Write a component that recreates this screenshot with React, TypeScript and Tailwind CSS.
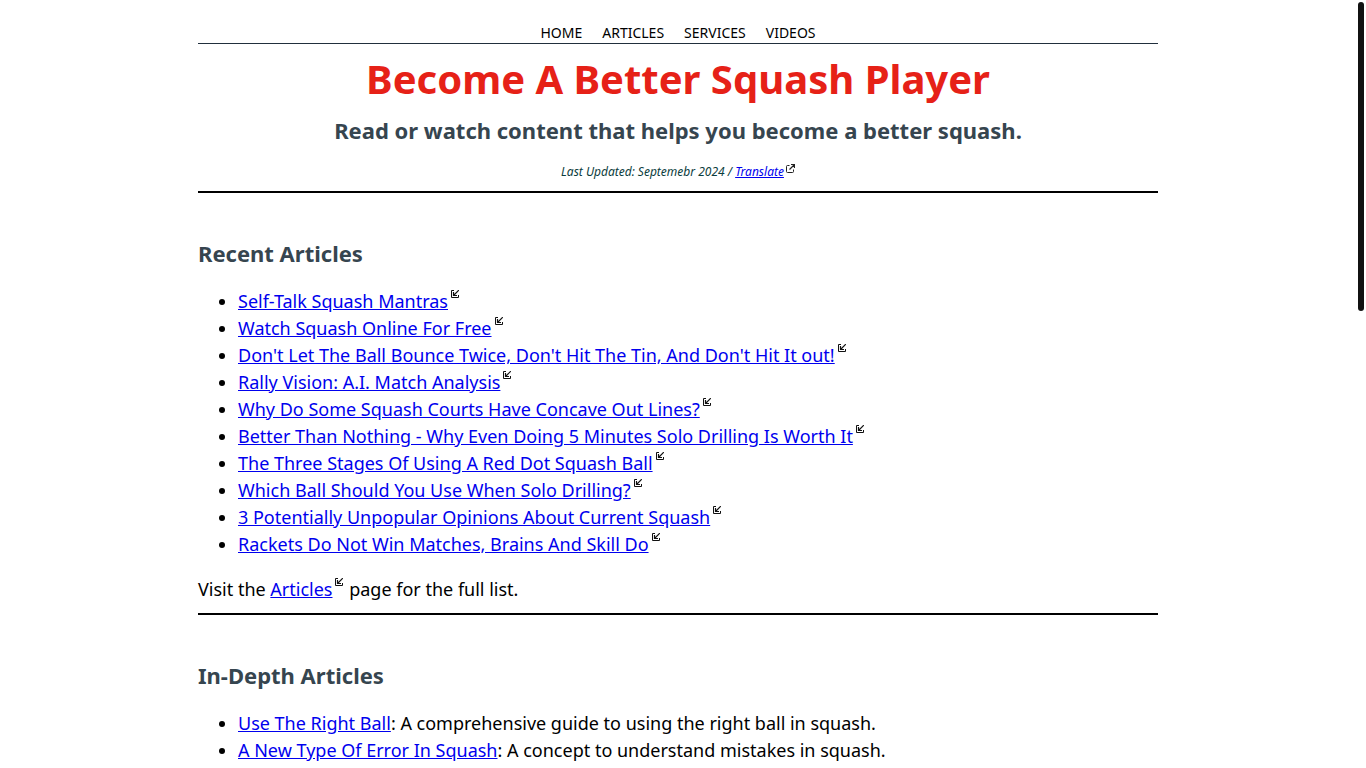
const recentArticles = [
  'Self-Talk Squash Mantras',
  'Watch Squash Online For Free',
  "Don't Let The Ball Bounce Twice, Don't Hit The Tin, And Don't Hit It out!",
  'Rally Vision: A.I. Match Analysis',
  'Why Do Some Squash Courts Have Concave Out Lines?',
  'Better Than Nothing - Why Even Doing 5 Minutes Solo Drilling Is Worth It',
  'The Three Stages Of Using A Red Dot Squash Ball',
  'Which Ball Should You Use When Solo Drilling?',
  '3 Potentially Unpopular Opinions About Current Squash',
  'Rackets Do Not Win Matches, Brains And Skill Do',
];

const inDepthArticles = [
  { title: 'Use The Right Ball', text: 'A comprehensive guide to using the right ball in squash.' },
  { title: 'A New Type Of Error In Squash', text: 'A concept to understand mistakes in squash.' },
];

const navItems = ['HOME', 'ARTICLES', 'SERVICES', 'VIDEOS'];

function InternalIcon() {
  return (
    <svg viewBox="0 0 8 8" className="mr-px ml-[3px] inline-block h-2 w-2 -translate-y-[10px] align-baseline" fill="none" stroke="#111" aria-hidden="true">
      <path d="M3 0.5H0.5V7.5H7.5V5" />
      <path d="M7.8 0.2L3 5" strokeWidth="1.2" />
      <path d="M2.5 2V5.5H6" strokeWidth="1.2" />
    </svg>
  );
}

function ExternalIcon() {
  return (
    <svg viewBox="0 0 9 9" className="ml-[2px] inline-block h-[9px] w-[9px] -translate-y-[3px] align-baseline" fill="none" stroke="#222" aria-hidden="true">
      <path d="M3.5 1.5H1.5Q0.5 1.5 0.5 2.5V7.5Q0.5 8.5 1.5 8.5H6.5Q7.5 8.5 7.5 7.5V5.5" />
      <path d="M5 0.5H8.5V4M8.5 0.5L3.5 5.5" strokeWidth="1.2" />
    </svg>
  );
}

function TextLink({ children }: { children: string }) {
  return <a href="#" className="text-[#0000ee] underline">{children}</a>;
}

export default function App() {
  return (
    <div className="bg-white pr-[10px] font-['Noto_Sans',sans-serif] text-lg/[27px] text-black">
      <div className="mx-auto max-w-[960px]">
        <header className="border-b-2 border-black pb-[10px] text-center">
          <nav className="flex justify-center gap-5 border-b border-[#212f3d] pt-[22px] text-sm/[21px]">
            {navItems.map((item) => <a key={item} href="#">{item}</a>)}
          </nav>
          <h1 className="mt-[5px] text-[40px]/[60px] font-bold text-[#e62117]">Become A Better Squash Player</h1>
          <h2 className="mt-[5px] text-[22px]/[33px] font-bold text-[#36454f]">Read or watch content that helps you become a better squash.</h2>
          <p className="mt-4 text-xs/[18px] text-[#0b3d3d] italic">
            Last Updated: Septemebr 2024 / <TextLink>Translate</TextLink><ExternalIcon />
          </p>
        </header>

        <section className="border-b-2 border-black pt-11 pb-[10px]">
          <h2 className="text-[22px]/[33px] font-bold text-[#36454f]">Recent Articles</h2>
          <ul className="mt-[18px] list-disc pl-10">
            {recentArticles.map((title) => (
              <li key={title}><TextLink>{title}</TextLink><InternalIcon /></li>
            ))}
          </ul>
          <p className="mt-[18px]">
            Visit the <TextLink>Articles</TextLink><InternalIcon /> page for the full list.
          </p>
        </section>

        <section className="pt-11">
          <h2 className="text-[22px]/[33px] font-bold text-[#36454f]">In-Depth Articles</h2>
          <ul className="mt-[18px] list-disc pl-10">
            {inDepthArticles.map((a) => (
              <li key={a.title}><TextLink>{a.title}</TextLink>: {a.text}</li>
            ))}
          </ul>
        </section>
      </div>

      {/* scroll thumb */}
      <div className="fixed top-[2px] right-[2px] h-[309px] w-[6px] rounded-full bg-[#111]" />
    </div>
  );
}
